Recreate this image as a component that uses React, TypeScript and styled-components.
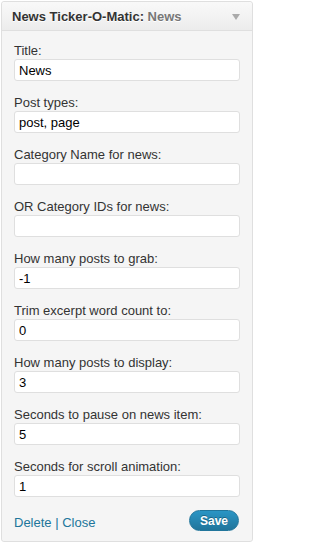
import React from "react";
import styled, { createGlobalStyle } from "styled-components";

const fields = [
  { label: "Title:", value: "News" },
  { label: "Post types:", value: "post, page" },
  { label: "Category Name for news:", value: "" },
  { label: "OR Category IDs for news:", value: "" },
  { label: "How many posts to grab:", value: "-1" },
  { label: "Trim excerpt word count to:", value: "0" },
  { label: "How many posts to display:", value: "3" },
  { label: "Seconds to pause on news item:", value: "5" },
  { label: "Seconds for scroll animation:", value: "1" },
];

export default function App() {
  return (
    <>
      <GlobalStyle />
      <Page>
        <Widget>
          <WidgetTop>
            <WidgetTitle>
              News Ticker-O-Matic: <InTitle>News</InTitle>
            </WidgetTitle>
            <Arrow />
          </WidgetTop>
          <WidgetInside>
            {fields.map((f) => (
              <Field key={f.label}>
                <Label>{f.label}</Label>
                <Input type="text" defaultValue={f.value} />
              </Field>
            ))}
            <Controls>
              <Links>
                <Link href="#">Delete</Link> | <Link href="#">Close</Link>
              </Links>
              <SaveButton>Save</SaveButton>
            </Controls>
          </WidgetInside>
        </Widget>
      </Page>
    </>
  );
}

const GlobalStyle = createGlobalStyle`
  html, body {
    margin: 0;
    padding: 0;
    background: #ffffff;
  }
  body {
    font-family: "Liberation Sans", Arial, sans-serif;
    font-size: 13px;
    color: #333333;
  }
`;

const Page = styled.div`
  padding: 1px 2px 0 1px;
`;

const Widget = styled.div`
  width: 252px;
  box-sizing: border-box;
  border: 1px solid #dfdfdf;
  border-radius: 3px;
  background: #f5f5f5;
  box-shadow: 0 1px 0 #ffffff inset;
`;

const WidgetTop = styled.div`
  height: 28px;
  display: flex;
  align-items: center;
  justify-content: space-between;
  padding: 0 12px 0 10px;
  background: linear-gradient(to bottom, #f9f9f9, #ececec);
  border-bottom: 1px solid #dfdfdf;
  border-radius: 3px 3px 0 0;
`;

const WidgetTitle = styled.h3`
  margin: 0;
  font-size: 13px;
  font-weight: bold;
  color: #333333;
  text-shadow: 0 1px 0 #ffffff;
  white-space: nowrap;
`;

const InTitle = styled.span`
  color: #777777;
`;

const Arrow = styled.span`
  width: 0;
  height: 0;
  border-left: 4px solid transparent;
  border-right: 4px solid transparent;
  border-top: 6px solid #aaaaaa;
  margin-top: 2px;
`;

const WidgetInside = styled.div`
  padding: 11px 12px 10px 12px;
  background: #f5f5f5;
  border-radius: 0 0 3px 3px;
`;

const Field = styled.div`
  display: flex;
  flex-direction: column;
  margin-bottom: 13px;
`;

const Label = styled.label`
  line-height: 17px;
  color: #333333;
`;

const Input = styled.input`
  height: 22px;
  box-sizing: border-box;
  width: 100%;
  margin: 0;
  padding: 0 4px;
  border: 1px solid #dfdfdf;
  border-radius: 3px;
  background: #ffffff;
  font-family: "Liberation Sans", Arial, sans-serif;
  font-size: 13px;
  color: #000000;
  outline: none;
`;

const Controls = styled.div`
  display: flex;
  align-items: center;
  justify-content: space-between;
  margin-top: 1px;
`;

const Links = styled.div`
  color: #21759b;
  padding-top: 4px;
`;

const Link = styled.a`
  color: #21759b;
  text-decoration: none;
`;

const SaveButton = styled.button`
  height: 21px;
  padding: 0 10px;
  margin-right: 1px;
  border: 1px solid #21759b;
  border-radius: 11px;
  background: linear-gradient(to bottom, #2a95c5, #21759b);
  color: #ffffff;
  font-family: "Liberation Sans", Arial, sans-serif;
  font-size: 12px;
  font-weight: bold;
  text-shadow: 0 -1px 0 rgba(0, 0, 0, 0.3);
  cursor: pointer;
`;
